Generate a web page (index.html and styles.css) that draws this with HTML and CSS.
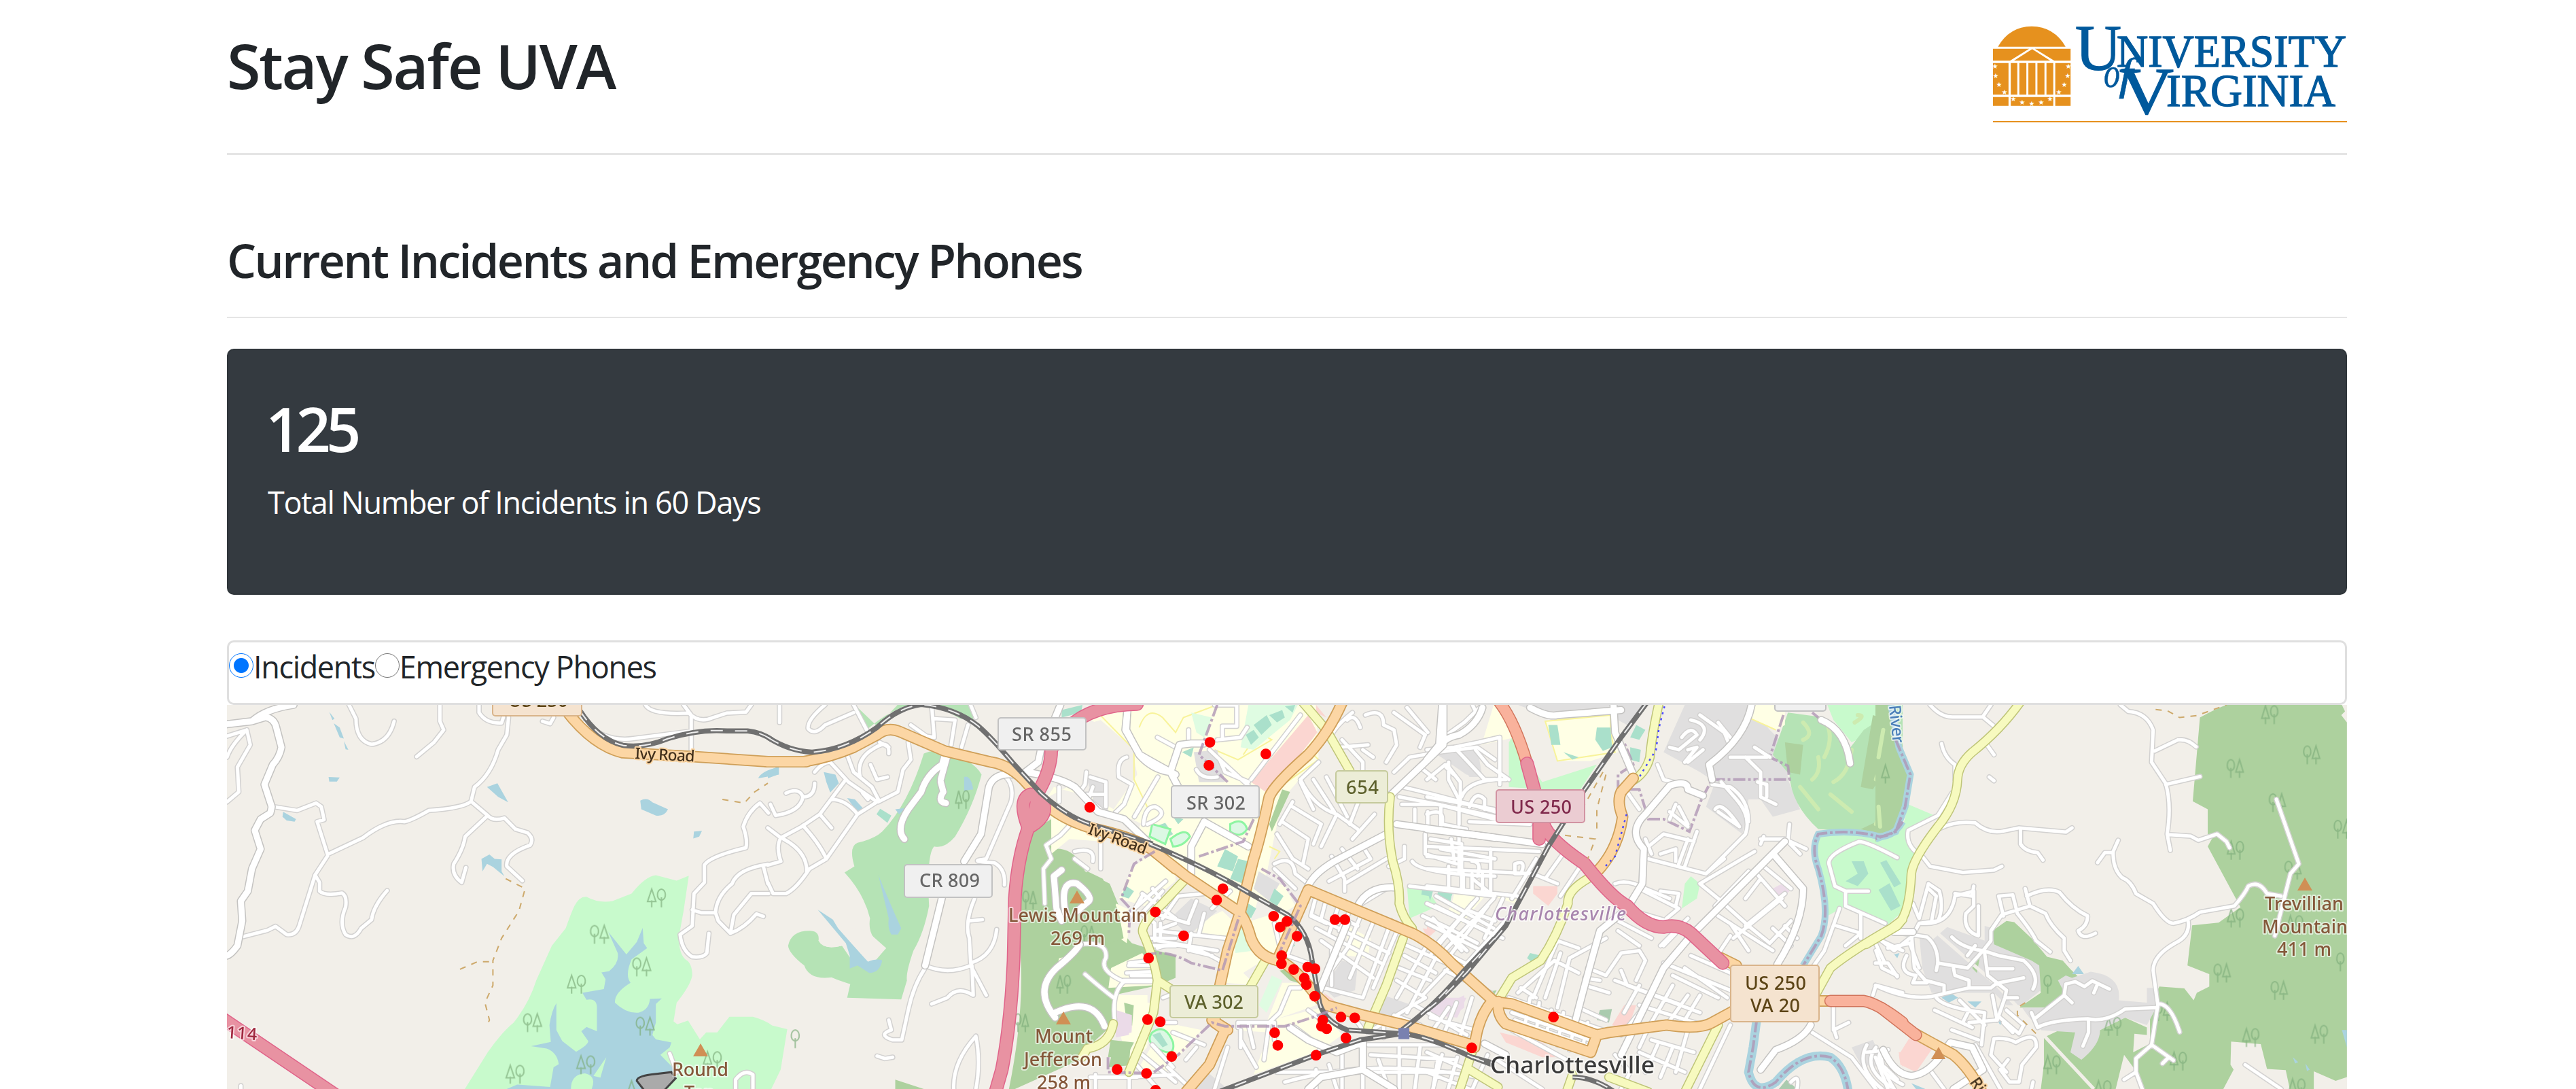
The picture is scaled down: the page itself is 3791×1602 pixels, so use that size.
FILE: index.html
```html
<!DOCTYPE html>
<html lang="en">
<head>
<meta charset="utf-8">
<title>Stay Safe UVA</title>
<link rel="stylesheet" href="styles.css">
</head>
<body>
<div class="container">
  <header class="header">
    <h1 class="title">Stay Safe UVA</h1>
    <svg class="logo" viewBox="2933 35 521 150" role="img" aria-label="University of Virginia">
      <g transform="translate(2900 20) scale(.3699 .3333)">
        <g fill="#e6911e">
          <path d="M109,146Q155,57 243,56Q332,57 378,146Z"/>
          <path d="M89,155H233L157,208H89Z M256,155H398V208H333Z M245,157L317,208H173Z"/>
          <path d="M89,218H151V358H89Z M160,218H186V358H160Z M194,218H222V358H194Z M230,218H258V358H230Z M266,218H294V358H266Z M302,218H329V358H302Z M337,218H398V358H337Z"/>
          <path d="M89,368H151V407H89Z M160,368H329V407H160Z M337,368H398V407H337Z"/>
          <path d="M89,474H1498V480H89Z"/>
        </g>
      </g>
      <g class="stars" text-anchor="middle">
        <text x="2936" y="101">★</text><text x="2937" y="115">★</text><text x="2942" y="128">★</text><text x="2950" y="139">★</text><text x="2963" y="149">★</text><text x="2976" y="154">★</text><text x="2990" y="156">★</text><text x="3004" y="154">★</text><text x="3017" y="149">★</text><text x="3030" y="139">★</text><text x="3038" y="128">★</text><text x="3043" y="115">★</text><text x="3044" y="101">★</text>
      </g>
      <g class="wordmark">
        <text x="3054" y="103" font-size="96" textLength="68" lengthAdjust="spacingAndGlyphs">U</text>
        <text x="3115" y="97.500" font-size="67" textLength="338" lengthAdjust="spacingAndGlyphs">NIVERSITY</text>
        <text x="3119" y="166.500" font-size="97" textLength="80" lengthAdjust="spacingAndGlyphs">V</text>
        <text x="3188" y="155.500" font-size="68" textLength="249" lengthAdjust="spacingAndGlyphs">IRGINIA</text>
        <text class="of" x="3096" y="128" font-size="62" textLength="24" lengthAdjust="spacingAndGlyphs">o</text>
        <text class="of" x="3118" y="131" font-size="66" textLength="21" lengthAdjust="spacingAndGlyphs">f</text>
      </g>
    </svg>
  </header>
  <hr class="rule rule-top">
  <h2 class="subtitle">Current Incidents and Emergency Phones</h2>
  <hr class="rule rule-sub">
  <section class="card">
    <h3 class="count">125</h3>
    <p class="caption">Total Number of Incidents in 60 Days</p>
  </section>
  <form class="options">
    <label class="option"><input class="radio" type="radio" name="layer" checked><span>Incidents</span></label>
    <label class="option"><input class="radio" type="radio" name="layer"><span>Emergency Phones</span></label>
  </form>
  <svg class="map" viewBox="334 1037 3120 565">
    <defs>
      <g id="pine"><path d="M0,55L12,5L24,55Z M12,50V78"/></g>
      <g id="leaf"><path d="M12,50C-6,42 0,5 12,5S30,42 12,50Z M12,38V78"/></g>
      <g id="tp"><use href="#pine"/><use href="#leaf" x="28"/></g>
      <g id="tl"><use href="#leaf"/><use href="#pine" x="28"/></g>

      <g id="minor">
        <g transform="translate(330 1030) scale(.5102 .3648)">
          <path d="M8,410L42,370L38,270L75,180L65,120L8,145 M65,120Q20,180 8,230 M360,19L380,75Q380,165 425,178Q475,170 490,85 M622,19V85L633,120L605,170L555,228 M735,19V50Q755,95 800,92L805,70 M820,70L815,140L790,200Q770,300 722,350L712,408Q690,435 590,445Q540,485 520,490Q470,480 400,555L298,622L268,490L288,482L280,430L265,415L210,445L145,430 M298,628L262,705L215,915Q205,950 180,945L148,912L125,928L50,955 M262,705L275,735V770Q290,790 340,778Q355,790 350,835Q330,900 350,945Q375,970 395,920L425,885Q430,830 470,768 M712,408L760,465L695,550Q690,600 662,660Q655,705 685,735L697,675 M760,465Q775,490 808,475L840,520L875,535Q895,560 882,585Q810,620 815,670L860,728 M918,85L940,95L950,70 M1215,19Q1230,60 1340,52Q1370,95 1410,70L1450,52L1505,48L1520,19 M1325,19L1347,60V200 M1040,90Q1100,170 1180,155L1347,125 M1570,455L1545,415Q1510,450 1497,510Q1510,560 1505,595Q1400,630 1385,665V735L1355,780L1350,910L1315,945Q1320,1010 1350,1035Q1380,1040 1392,1020L1398,940 M1350,845L1375,857H1417L1425,890L1460,940L1470,865L1520,780H1570 M1417,857Q1420,790 1465,740Q1480,680 1568,662 M1555,670L1568,740 M1460,940Q1500,920 1535,862L1555,872 M1285,1425L1305,1500 M1475,1568V1530Q1500,1485 1525,1510V1568 M48,1555V1568"/>
        </g>
        <g transform="translate(1130 1030) scale(.38265 .3648)">
          <path d="M45,19V90 M220,19Q150,80 155,115Q180,145 220,100L330,50 M330,19L380,120 M630,19L640,150L610,145L550,100 M640,75L720,80L705,180 M770,100L745,190 M780,19L800,70"/>
          <path d="M180,290Q210,250 240,250L310,330L420,410L345,460L225,640 M305,220L330,290L400,350L425,400 M355,310Q340,240 400,200Q470,150 465,215 M395,260L420,320L460,310 M540,170L550,240L520,280L500,370L425,410 M300,320L200,460L130,510L50,555L0,515 M70,375Q120,350 135,390Q125,450 30,465L10,420 M135,390Q180,390 180,335 M245,400Q300,400 345,460 M135,505Q200,580 225,640L160,680Q110,760 70,780H20L0,735 M50,555Q30,590 50,650L0,665 M60,560Q150,610 150,690 M200,460L245,515 M365,375L385,400 M430,170L465,190"/>
          <path d="M910,305Q950,340 935,410L840,640Q760,650 870,655Q915,680 910,745 M795,800Q755,900 775,960L780,1060Q870,1030 880,925 M775,890L825,885 M605,1070Q690,1110 780,1070L840,1190 M785,1070L790,1190Q730,1150 690,1200L630,1225 M605,1080Q560,1150 540,1250L515,1370H480Q420,1350 475,1330L465,1290 M800,1355Q710,1460 715,1568 M800,1355Q820,1460 800,1568 M420,1435L450,1445L480,1440"/>
          <path d="M1165,500L1125,545L1070,585L1090,640L1060,680L1065,820 M1200,985Q1310,970 1300,1040Q1270,1090 1370,1135L1480,1135 M1370,1135Q1320,1180 1335,1300 M1220,1105Q1280,1160 1330,1200 M1225,290L1220,340L1200,370L1280,440 M1240,310L1300,330V430 M1225,380L1290,380 M1250,350L1230,410 M1350,310Q1340,240 1380,230 M1350,310L1400,340L1370,420L1335,455 M1500,310L1410,470 M1445,500Q1450,430 1490,430Q1550,460 1460,500 M1180,610Q1260,590 1250,650 M1180,640L1230,680 M1280,560V680 M1120,350V410 M1440,780L1568,880 M1400,850L1530,730 M1440,790L1390,880 M1480,760L1530,830 M1490,930L1568,900 M1460,960H1568 M1470,990H1568 M1380,1100L1480,1095 M1390,1060L1470,1050 M1510,900V950 M1520,1200L1568,1180 M1500,1300H1568 M1400,1450L1500,1568 M1240,1520H1420 M1260,1568V1510 M1390,1510V1568 M1440,1430L1568,1540"/>
        </g>
        <g transform="translate(1600 1030) scale(.38265 .3648)">
          <path d="M270,150L340,190 M390,120V180 M490,19H575V105H520V150 M500,160L590,150L615,110 M470,200L510,240L530,290L620,330 M510,240L620,345 M420,280Q440,320 500,310 M820,60L630,320 M1020,50Q960,100 940,140 M1050,110Q1030,50 1000,80 M1070,60Q1140,30 1140,100L1180,120L1190,180L1150,250 M980,160L1060,250V290 M970,190L1080,180 M1060,200L1100,230 M1180,50L1300,140L1280,190 M1230,30L1310,130 M1370,150L1450,90L1520,19 M1180,290L1240,230L1350,210L1500,190L1568,240 M1280,270L1340,320 M1390,250V320L1430,400V500 M1210,350Q1380,390 1568,450 M1200,390Q1400,430 1568,470 M1380,270L1410,300 M1440,390Q1460,330 1568,320"/>
          <path d="M890,250L820,320Q870,430 960,460L1040,520 M820,330L870,440 M870,320L950,450 M920,310L1000,470 M790,410L740,500 M790,430L900,500L870,580 M750,490L850,560L830,660 M730,540L790,640L850,680 M960,460L900,590 M1050,390L1010,500 M1105,460L1020,560 M720,660Q790,620 800,700L850,740 M720,680L800,760 M940,630L990,720V770 M980,600L1040,680 M1060,590L1090,640L930,730 M1150,640L990,740 M880,790L860,870L920,900 M920,800L900,880 M970,820L930,940 M1010,850L970,930 M870,870L1160,1020 M880,920L1130,1060 M900,970L1100,1120 M1060,850L1000,1000L910,1130 M1110,870L1010,1120 M1170,890L1060,1200 M1200,910L1100,1160 M910,1160L1060,1200 M940,1010V1150 M1040,830L1150,760 M980,880L1040,910"/>
          <path d="M1210,420H1350L1568,480 M1260,440V500 M1310,450V510 M1360,430V510 M1300,540V620L1420,660 M1250,650Q1280,700 1568,710 M1320,560L1440,580V760 M1360,600L1568,640 M1430,540V700 M1480,650Q1520,650 1500,710 M1390,670V760 M1480,700V770 M1520,700V780 M1220,590V640L1160,670 M1240,750L1568,790 M1230,990L1380,1060 M1220,1030L1340,1100 M1200,1080L1320,1130 M1190,1130L1300,1200 M1290,870L1390,920L1500,980 M1340,830L1568,950 M1330,880L1440,1010 M1540,830L1380,1050 M1500,800L1330,1000 M1300,1000L1190,1200 M1340,1040L1230,1260 M1390,1080L1290,1190 M1470,850L1568,890 M1410,960L1460,1010"/>
          <path d="M290,770L210,860L260,900V970 M330,770L260,860L390,900 M260,930L530,960 M270,970L500,1010 M270,1000Q360,960 510,1050 M390,890L420,810 M400,940L390,1010 M290,880L350,790L450,780 M430,940L450,860 M160,1070H250 M170,1110H250 M550,770L480,840 M140,1130H260 M400,1010L480,1030 M740,990L720,900 M790,970L770,1030L850,1060 M820,1160L780,1160L740,1260L700,1300L680,1450 M850,1250L890,1280 M800,1320L900,1400L880,1430 M590,1330V1400 M540,1400L490,1568 M580,1320V1300L720,1300 M620,1310L640,1400 M310,1480L400,1568 M160,1520L340,1510 M250,1390L330,1480 M450,1390L330,1340 M420,1400L380,1450 M590,1370L650,1480 M720,1370V1300 M980,1430V1568 M1060,1400V1568 M730,1500H1400 M760,1540Q1100,1440 1500,1520 M880,1490V1568 M930,1470L960,1568 M1120,1450L1160,1568 M1200,1400V1568 M1280,1400L1260,1568 M1350,1440L1330,1568 M1080,1390H1400 M1090,1430L1420,1450 M1000,1240L1060,1330 M1080,1340L1300,1200 M1140,1280V1360 M1180,1270L1280,1310 M1260,1230L1460,1350 M1320,1280L1490,1330 M1420,1220L1370,1350 M1480,1200L1430,1370 M1330,1330L1390,1240"/>
        </g>
        <g transform="translate(2100 1030) scale(.44643 .3648)">
          <path d="M0,200L90,190L170,170L240,150 M150,19L170,70 M90,190L190,320L260,320 M240,150V340 M65,260L110,330V420 M160,200L200,260L270,320 M0,390L220,440 M0,320L60,260 M140,430Q160,360 190,400V440 M0,460Q60,430 50,500L130,520 M140,490L340,500 M0,630L210,650 M80,560L90,650 M0,590L370,610 M0,680L350,700 M210,600V780 M0,750L300,790 M290,700V660Q330,640 310,700Z M360,640L280,800 M120,700V760 M150,720L200,770 M350,700L430,740 M460,600L390,720 M500,680L440,790 M250,800L190,960 M0,820L250,960 M30,790L220,920 M0,900L180,1010 M0,980L140,1070 M220,800L50,1020 M150,820L10,1030 M280,860L110,1090 M60,1090L210,1180"/>
          <path d="M350,1200L430,970L500,1000 M390,1200L440,1020 M430,1240L470,1040L590,960 M300,1180L420,1050L500,1100 M310,1160L360,1200 M270,1200L580,1330 M280,1260L560,1380 M340,1200L320,1330 M370,1220L360,1350 M410,1250L390,1370 M450,1260L430,1390 M490,1280L470,1410 M530,1300L510,1420 M290,1290L540,1400 M500,1240L590,1290 M520,1150L600,1180 M530,1080L590,1110L640,1020L700,1010L720,1050L690,1130 M520,1120L570,1130 M630,930L700,990 M640,1090L660,1150L900,1260 M620,1130L840,1230 M700,1150L650,1260 M760,1130L700,1260L640,1350 M810,1150L740,1300 M860,1190L790,1310 M900,1190L850,1290 M780,1060L1000,1170 M810,1110L960,1200 M850,1080L990,1200 M870,1030L1000,1100 M700,1230L960,1330 M740,1370L880,1420 M700,1420L850,1500 M760,1390L720,1500 M810,1400L770,1520 M620,1430L670,1500L640,1568 M860,1330L820,1500 M1000,1310L900,1568 M730,1320L700,1400 M280,1330L460,1450 M200,1430L150,1568 M0,1500L140,1568 M50,1430L20,1568 M100,1440L70,1568 M0,1420L150,1500 M230,1450L380,1568"/>
          <path d="M620,740Q660,720 720,760L800,800 M700,760L830,840L790,880 M680,850L790,890L820,940 M770,770L830,780L820,830 M630,890L740,960 M730,640L920,700L1050,540Q1070,470 1020,400L970,330 M730,590L780,540L880,570 M740,620L720,560 M860,560L830,660 M770,620L820,600V650 M890,530L850,670 M940,340L1000,350Q1060,400 1060,490 M950,440Q970,400 1030,510L960,450 M800,450L860,510 M830,430L860,500 M820,420L800,480 M660,370L700,440 M1050,230L1100,290V390L1150,420 M1090,330L1120,340V390 M1000,230L1120,230 M1080,190L1130,230 M900,60L980,130L1000,190 M960,90L1000,150 M840,150Q870,100 890,140L830,200L800,190 M860,200L890,190L850,250 M870,80Q940,100 900,160 M910,200L860,250 M760,260L780,320L840,340 M1100,560L1180,560L1250,600 M1100,580L1110,550 M1195,500L1190,570L1230,620 M900,740L960,800L1060,910L1130,980 M900,740L1080,610 M920,700L980,640 M950,830L1060,690 M960,870L1140,1010 M1050,910L1180,780 M1080,690L1180,830 M1110,670L1200,760 M1010,960L1170,800 M1130,980L1200,890 M1180,910L1220,960 M1140,920L1200,990 M1000,950L940,1060 M1060,1010L1000,900 M860,880L770,990 M820,940L780,990 M1050,800L1100,720"/>
          <path d="M1550,635Q1450,570 1425,570Q1320,620 1325,660L1345,750L1380,770L1455,770 M1380,770V830L1510,900 M1360,840L1310,1010L1270,1080 M1350,910L1430,940L1380,990 M1430,860V960 M1480,1010L1500,1080L1550,1110 M1480,960L1568,1010 M1340,1230V1330L1390,1300 M1270,1340L1400,1440L1480,1568 M1340,1320L1350,1360 M1470,1190L1480,1150L1568,1180 M1450,1390Q1410,1480 1500,1568 M1480,1400Q1430,1480 1530,1560 M1500,1410Q1460,1480 1568,1550 M1450,1420L1520,1410 M1200,1540Q1230,1500 1220,1568"/>
        </g>
        <g transform="translate(2760 1030) scale(.45918 .3648)">
          <path d="M175,19Q210,70 250,68H345L385,110 M345,65L370,19 M360,185L380,220 M212,175Q220,230 255,260V320 M245,375L200,465L105,525Q95,590 150,630L175,670L280,695L380,685L405,670 M210,515Q260,485 320,495Q360,540 410,528L460,515L610,532L630,515 M465,520V580Q480,610 520,615L537,645 M365,310L380,325"/>
          <path d="M120,820L140,880L170,740L205,770Q220,840 200,890L140,900L115,960 M170,760L195,790L180,890 M145,900Q240,910 255,790L315,770V830L290,860Q280,930 330,950V830 M255,780L310,790L315,750 M410,870L395,790L440,785L455,860 M480,760L495,830L405,865L370,930V970L345,1010L395,1030L475,1050Q530,1110 505,1165 M485,790Q550,750 590,775Q630,840 680,870Q680,910 650,930Q660,970 705,940 M495,830L545,860Q560,910 605,960V1010L625,1050 M455,860Q500,930 515,970L560,1015 M245,955Q280,1000 345,1010L295,1080L200,1060L195,1090 M320,990L295,1030 M350,1020L360,1110L420,1170L415,1200L390,1290L300,1300 M360,1083H440 M395,1140L475,1120 M415,1200H455 M250,1080L255,1110L300,1130V1160 M0,1150Q100,1210 180,1195L300,1160H370L390,1140"/>
          <path d="M60,935L165,955Q200,990 200,1060 M115,940L125,1080L160,1130L220,1150V1180 M20,970L60,1010L110,960 M100,1030Q70,1100 130,1110L120,1140H165 M0,1060L40,1060L70,1115 M0,980L30,1060 M40,1000L110,980L140,1080 M195,1200Q220,1240 350,1260L340,1390 M270,1210L350,1310 M190,1250L310,1320 M245,1330L330,1370 M300,1250L280,1300 M375,1190L390,1290 M390,1270L460,1345L475,1310L420,1250 M410,1300L440,1340 M370,1430L380,1365Q420,1360 450,1380Q520,1330 515,1400L470,1470L460,1540H430L400,1490L425,1450 M370,1430L420,1500 M180,1500L220,1568 M320,1390L400,1568 M505,1540L500,1568 M20,1410Q10,1470 60,1568 M0,1440L40,1568 M30,1480L70,1530"/>
          <path d="M515,1280L605,1190L630,1220 M605,1190L610,1145L640,1135L670,1155L695,1132L750,1165 M710,1150L700,1180 M500,1260L520,1320Q560,1290 680,1285Q740,1300 800,1245L900,1240 M683,1290V1340L665,1395"/>
          <path d="M785,19L810,45Q870,50 890,120L885,250L930,335Q950,420 935,540L945,605 M895,205L970,160Q1000,155 1028,188 M930,340L1040,308 M940,542L1010,548L1035,565L1095,540L1125,570L1135,595 M778,565L762,610Q760,680 790,715Q820,730 835,780L890,820Q930,900 955,900Q1000,890 1040,855L1150,830Q1185,780 1195,750Q1230,725 1255,780L1300,790 M712,655L735,615H760 M1285,400L1357,660L1330,700L1280,950 M1002,890Q1010,950 960,980Q890,1030 890,1090L905,1230L885,1390L835,1445V1500L855,1568 M905,1225Q945,1220 975,1338 M885,1390L955,1452 M920,1465L940,1440 M835,1500L797,1530 M1185,1470L1300,1568"/>
        </g>
      </g>

      <g id="tertiary">
        <g transform="translate(330 1030) scale(.5102 .3648)"><path d="M8,97L80,85L120,68Q145,75 150,110L165,190Q160,230 140,260L116,340L137,430L133,455L105,480L88,525L105,600L80,680L68,770L48,810L52,890L38,990Q20,1025 8,1030 M80,85Q120,35 200,19"/></g>
        <g transform="translate(1130 1030) scale(.38265 .3648)"><path d="M950,300Q870,290 850,350L820,540L755,650 M670,795L605,1070 M1125,19L1105,70 M1050,200L1040,250L990,290 M990,290Q1120,310 1180,350L1270,450L1370,480L1460,570 M1385,19L1375,120L1430,220Q1530,280 1568,300 M680,225L670,260Q610,300 590,370L540,440Q490,520 525,560 M665,320L690,225 M665,330L675,370Q650,410 685,415 M1130,685L1100,710L1110,840L1130,890 M1145,860Q1120,720 1190,740Q1250,790 1235,810L1190,850 M1200,985Q1180,1020 1110,1080Q1020,1170 1105,1280 M1105,1260Q1250,1190 1295,1315"/></g>
        <g transform="translate(1600 1030) scale(.38265 .3648)"><path d="M155,19L150,120L200,220Q250,280 320,290L355,180L400,175H450 M320,290L350,350 M450,490L400,590V700 M450,490L620,590 M1370,19V180L1150,400 M1350,200Q1370,150 1430,140Q1500,100 1520,30 M1190,500L1568,555 M850,750Q870,700 950,650L1150,540 M1040,830Q1080,750 1180,755 M1000,900L890,1180 M780,1320L850,1370L960,1420L1060,1380V1490L1180,1568 M1060,1490L900,1520L850,1568"/></g>
        <g transform="translate(2100 1030) scale(.44643 .3648)"><path d="M50,19L40,180L0,240 M340,30Q400,70 430,60L640,40 M615,19L620,130L680,300 M1070,19Q1050,150 930,260L940,320 M720,460L800,345Q860,320 860,360L910,385 M720,460Q660,530 715,600L710,740L670,820 M650,850L570,930Q530,1100 490,1290 M1180,570L870,950L780,1080L640,1430 M1145,625L1240,760Q1240,900 1155,1065 M1300,80Q1380,120 1395,255 M190,1385L260,1430 M1265,1310Q1240,1370 1150,1410L1100,1490 M0,520L200,550L380,580 M360,500L400,570"/></g>
        <g transform="translate(2760 1030) scale(.45918 .3648)"><path d="M25,1410Q60,1510 115,1515Q160,1510 200,1450L240,1380L310,1400L345,1490L250,1568 M60,935H120"/></g>
      </g>

      <g id="secondary">
        <g transform="translate(1600 1030) scale(.38265 .3648)"><path d="M830,10L920,120L1010,285 M1165,390Q1150,520 1175,650Q1205,750 1200,820Q1215,880 1250,920 M1215,960L1150,1150L1080,1320 M685,1050L625,1160 M375,725L290,820Q200,910 215,940Q260,1050 270,1130L255,1260L160,1500 M270,1130L330,1170 M100,1305Q85,1390 0,1405L-20,1440 M1480,1420L1430,1580 M1470,1490L1580,1560"/></g>
        <g transform="translate(2100 1030) scale(.44643 .3648)"><path d="M765,10Q740,150 735,230Q720,300 670,330 M530,720Q460,770 465,820Q430,950 375,1050L280,1120L240,1200 M1568,885L1530,920Q1400,1010 1330,1080L1285,1180 M960,1310L850,1580 M480,1510L460,1580 M600,1520L730,1580"/></g>
        <g transform="translate(2760 1030) scale(.45918 .3648)"><path d="M463,10Q400,120 310,210Q265,260 263,320Q260,420 200,510Q120,640 115,700Q110,860 70,910L-30,985"/></g>
      </g>

      <g id="primary">
        <g transform="translate(330 1030) scale(.5102 .3648)"><path d="M985,40Q1065,185 1150,212L1360,228L1568,248H1680"/></g>
        <g transform="translate(1130 1030) scale(.38265 .3648)"><path d="M-5,248H140Q240,230 330,190L420,140Q460,105 510,128L680,205L860,250Q940,265 1000,340L1060,410Q1120,475 1240,515Q1400,550 1475,600L1568,680"/></g>
        <g transform="translate(1600 1030) scale(.38265 .3648)"><path d="M240,595L380,710L580,850Q610,880 630,960Q660,1040 740,1050Q800,1080 880,1190L920,1230L1060,1270L1220,1310L1480,1390 M980,10Q930,130 850,220Q720,340 700,390Q665,560 640,640L590,850L540,1010L500,1200L490,1300L530,1330Q500,1400 470,1470L380,1580 M730,1050L850,765L1250,940Q1330,980 1400,1060L1560,1210Q1500,1280 1490,1400 M480,1290L540,1330"/></g>
        <g transform="translate(2100 1030) scale(.44643 .3648)"><path d="M217,1215L280,1225L560,1350L540,1420L260,1305Q230,1270 235,1215 M560,1350L600,1340L790,1310Q900,1330 940,1300L1030,1240 M680,315L640,370Q625,410 645,470Q630,600 562,690 M1290,1213H1340 M970,1040L1020,1070"/></g>
        <g transform="translate(2760 1030) scale(.45918 .3648)"><path d="M120,1340L250,1430Q300,1480 345,1590"/></g>
      </g>

      <g id="trunk">
        <g transform="translate(2100 1030) scale(.44643 .3648)"><path d="M240,10Q290,90 330,255 M1330,1213H1440Q1490,1225 1568,1300"/></g>
        <g transform="translate(2760 1030) scale(.45918 .3648)"><path d="M20,1242L130,1350"/></g>
      </g>

      <g id="motorway">
        <g transform="translate(330 1030) scale(.5102 .3648)"><path d="M-20,1270L330,1600"/></g>
        <g transform="translate(1130 1030) scale(.38265 .3648)"><path d="M1420,16Q1180,20 1090,200Q1090,280 1040,370Q1020,500 1000,520Q960,640 950,800L945,1050Q935,1300 900,1490L870,1600 M1010,380Q960,400 1000,510 M1050,400Q1090,460 1010,510"/></g>
        <g transform="translate(2100 1030) scale(.44643 .3648)"><path d="M330,255L385,500Q400,560 520,660Q610,800 660,830Q720,915 780,915Q830,900 870,940L975,1060 M370,500V560"/></g>
      </g>

      <g id="rail">
        <g transform="translate(330 1030) scale(.5102 .3648)"><path d="M1025,40Q1080,160 1150,182Q1210,195 1280,155Q1370,115 1450,124H1510Q1550,130 1580,160"/></g>
        <g transform="translate(1130 1030) scale(.38265 .3648)"><path d="M0,150Q80,205 170,210Q300,200 420,110Q500,30 590,17Q720,30 810,105Q860,150 940,250L1050,375Q1150,470 1240,500L1480,580"/></g>
        <g transform="translate(1600 1030) scale(.38265 .3648)"><path d="M240,580Q450,670 610,770L770,865Q850,930 865,1050L890,1200Q900,1290 1000,1330L1210,1345Q1300,1350 1480,1440L1568,1465 M480,1590L880,1430L1050,1370L1210,1345 M1210,1330Q1340,1230 1450,1090L1568,960"/></g>
        <g transform="translate(2100 1030) scale(.44643 .3648)"><path d="M0,1250L50,1200L130,1100L260,910L400,590L520,360L640,150L725,10 M150,1440L215,1470 M480,1520Q560,1520 640,1600"/></g>
      </g>
    </defs>

    <!-- land cover -->
    <rect x="334" y="1037" width="3120" height="565" fill="#f2efe9"/>
    <g transform="translate(330 1030) scale(.5102 .3648)">
      <path class="park" d="M694,1568L760,1420Q800,1340 835,1300Q880,1220 900,1130L945,990L985,920Q1000,860 1010,830Q1025,790 1045,793Q1080,820 1120,810L1175,780Q1215,710 1245,706L1305,728L1340,708L1325,850L1312,950Q1310,1020 1330,1045Q1350,1060 1350,1110Q1345,1150 1305,1220L1296,1295L1307,1307L1338,1292L1372,1368L1390,1340H1422L1457,1277H1525Q1560,1290 1580,1312L1624,1327L1605,1490L1578,1568Z"/>
      <path class="water" d="M795,1580L845,1550L940,1560L950,1480L965,1468Q960,1420 930,1405L885,1395L942,1378L938,1310Q945,1250 958,1222V1330L975,1375L1015,1418Q1050,1390 1050,1375L1030,1335L1045,1318L1075,1335V1240Q1075,1200 1045,1208L1033,1180L1095,1165L1100,1125L1088,1098L1110,1093Q1140,1060 1135,1020L1108,935L1160,1025L1190,975L1207,918L1210,980L1220,1000L1175,1045Q1155,1110 1172,1140Q1125,1180 1127,1220Q1160,1265 1195,1260Q1225,1250 1228,1205L1262,1203L1245,1225V1300L1235,1350L1245,1368L1290,1380L1285,1400L1258,1430L1300,1490L1240,1580Z"/>
      <path class="park" d="M1000,1568Q1000,1510 1040,1505Q1075,1515 1060,1568Z M1102,1440L1065,1515L1085,1522Z"/>
      <path fill="#aaa" stroke="#444" stroke-width="3" d="M1190,1535Q1190,1518 1230,1510L1290,1500L1302,1525L1265,1580H1215Z"/>
      <path class="water" d="M303,47L318,75L312,80Z M316,93L333,110L345,155L333,150Z M345,165L358,200L350,198Z M301,310L333,312L325,328H303Z M758,350L788,335L819,412L790,390Z M742,640L765,622L780,640L800,642V690L808,710L775,672L758,660L745,690Z M170,450L207,480L203,490L180,485L168,470Z M1200,405Q1220,390 1235,412L1280,440Q1270,470 1245,465L1203,440Z M1355,530L1378,527L1370,550L1353,558Z M1540,315Q1550,285 1600,270V300Z"/>
    </g>
    <g transform="translate(1130 1030) scale(.38265 .3648)">
      <path class="golf" d="M335,19L385,115Q480,30 560,18L780,19L790,80L740,75L640,18H500L420,105Z M440,20H790V75L700,40L590,19Z M600,215Q650,190 700,225Q790,240 822,300Q790,430 720,550Q680,600 640,590Q610,620 620,830Q600,940 560,1010Q530,1100 535,1130L513,1207L305,1200L317,1145Q270,1130 245,1118Q160,1130 140,1070Q80,1020 78,990Q90,930 160,930Q200,930 195,970Q215,1010 285,990L410,1040L455,1000Q380,960 393,880Q370,780 295,695L333,670Q310,590 345,575Q410,560 440,530Q540,420 600,215Z"/>
      <path fill="#f2efe9" d="M195,970Q215,1010 285,990L330,1060L410,1055L455,1000L380,930L230,900Z"/>
      <path class="water" d="M192,845L250,885L270,920L312,970L385,1055Q420,1040 440,1050Q430,1100 390,1100L345,1070L315,1082V1030L300,980Z M425,705Q470,820 513,920L500,945H475Q460,920 465,880Z M755,310Q780,300 790,360L755,365Z M215,290L260,300L273,335L240,372L225,330Z M305,395L335,400L365,435L345,452Z M0,285L35,270L38,300L0,315Z M490,440L530,435L505,460Z"/>
      <path class="pitch" d="M432,438L475,465L460,495L418,460Z M1130,40L1210,19L1205,50L1130,70Z"/>
      <path class="wood" d="M1090,480L1095,600Q1180,590 1220,690L1315,740L1350,830L1330,900L1400,980L1460,1000L1568,1030V1120L1500,1150L1330,1190L1335,1300L1230,1400L1200,1450L925,1580Q990,1250 970,1000Q970,700 1010,530Z M490,1530L600,1568H490Z"/>
      <path class="wood" d="M1330,1400L1450,1370L1420,1470L1310,1480Z"/>
      <path class="school" d="M1230,70L1400,19H1568V600L1500,570L1440,500L1400,480L1290,460L1200,380L1100,350L1070,400L1110,460L1200,490L1290,570L1160,560L1090,620V480L1060,400L1170,340L1300,420L1420,300L1400,190Z M1500,590L1568,650V730L1450,830L1350,800L1400,680Z M1340,820L1400,850L1380,980L1300,920Z M1320,1080L1440,1020L1480,1080L1480,1150L1310,1160Z M1340,1190H1460V1360L1370,1400L1340,1300Z M1180,1110L1220,1100L1200,1130Z M1120,1040L1170,1030L1110,1090Z"/>
      <path fill="#f2efe9" d="M1280,80L1400,190L1420,300L1330,440L1190,350L1060,290L1110,130Z"/>
      <path class="wood" d="M1370,1220L1440,1240L1430,1330L1380,1300Z M1110,1060L1300,1040L1310,1150L1230,1100L1140,1200L1180,1230Z"/>
      <path fill="#ebdbe8" d="M1340,1250L1400,1270V1340L1340,1355Z"/>
    </g>
    <g transform="translate(1600 1030) scale(.38265 .3648)">
      <path class="school" d="M50,60L170,19H880L890,230L750,400L690,700L640,860L600,960L580,1100H540L590,880L430,780L400,700L250,600L200,510L240,450L290,310L200,260L140,130Z M420,900L520,850L570,900L530,960L420,930Z M600,900L720,860L780,870L740,1010L690,1040L600,1100L650,1150L530,1140Z M640,700L760,750L800,830L750,860L620,780Z M560,1330L900,1240L980,1350L900,1410L640,1510L700,1340Z M750,1140L840,1140L880,1230L690,1300Z M180,1220L260,1220L230,1400L160,1480Z M300,1300L440,1330L300,1500L200,1480Z M1430,780L1530,790L1440,900L1380,860Z M1000,910L1090,960L1080,1040L1000,1030Z"/>
      <path class="school-line" d="M50,60L180,200V320L240,450 M200,110Q230,20 290,70L340,130L370,70L500,19 M490,200L580,240L710,160L660,130L600,220 M740,350L890,240L860,210 M700,590L740,610L720,640"/>
      <path class="residential" d="M410,210L500,200L530,330H430Z M0,320L80,320V460L30,430Z M660,690L740,740L700,810L640,760Z M1340,220L1500,190L1520,310L1470,310L1440,260Z M910,1160L980,1050L1040,1070L1030,1170L950,1200Z M400,800L500,850L390,950L320,880Z M440,1480L540,1568H380Z M1140,1190L1250,1230L1200,1290L1120,1270Z"/>
      <path class="retail" d="M850,60L885,130L700,380L630,330Z M880,19L920,70L880,50Z M1290,920L1340,930L1310,960Z M910,1180L950,1210L930,1230Z"/>
      <path class="park-light" d="M620,19H810L780,80L640,200L590,190Z M400,50L480,70L450,150L420,130Z M560,900L600,910L640,1010L570,1020Z M660,1230L710,1110L750,1130L690,1260Z"/>
      <path class="pitch" d="M610,140L640,120L660,150L630,180Z M640,100L690,60L710,100L670,140Z M700,60L750,40L760,70L730,90Z M760,25L800,19L790,50Z M365,210L410,190L400,230Z M260,510L300,495L330,540L280,570Z M530,600L580,630L560,690L500,670Z M580,640L620,650L600,740L550,720Z M720,760L755,790L730,830L700,810Z M620,820L650,840L630,880L610,860Z M150,750L180,770L160,800L130,790Z M330,470L370,480L350,500Z M770,940L800,990L760,1010Z"/>
      <path class="wood" d="M750,360L780,370L710,530L700,500Z M0,690L60,720L120,850L140,960L60,990L0,940Z M280,1060L340,1080L310,1120L270,1110Z M90,1370L180,1380L150,1440H80Z M740,1090L800,1080L840,1150L780,1130Z"/>
      <path class="track" d="M250,1340Q300,1300 330,1380Q340,1440 280,1410Q220,1380 250,1340Z M320,560Q380,510 395,550Q370,590 330,590Z M550,500Q600,470 615,520Q590,560 550,530Z M250,500L320,520L300,580L240,550Z"/>
      <path class="pitch" d="M250,1350L280,1340L310,1390L290,1400Z"/>
      <path class="park" d="M1230,750H1300L1350,830L1240,880Z"/><path class="pitch" d="M1290,750L1330,760L1315,790L1285,785Z M1350,765L1405,770L1395,820L1345,800Z"/>
      <path fill="#ebdbe8" d="M110,1260L170,1280L160,1350L110,1360Z M1320,1260L1450,1190V1240L1400,1280Z"/>
    </g>
    <g transform="translate(2100 1030) scale(.44643 .3648)">
      <path class="residential" d="M300,19H620L720,19L660,100L600,60L400,65Z M850,19H1060L1130,120L1180,180L1190,320L1230,440L1140,470L1100,400H1060L1040,540L920,430L950,330L900,290L780,210Z M35,220L160,190L180,310L130,300Z M1400,1400L1470,1370L1510,1480L1430,1470Z"/>
      <path class="park" d="M270,170L280,150L380,330L560,260L500,370L270,350Z M1290,530L1568,450V840L1510,910L1380,830L1320,870L1275,640Z M1320,19H1568L1540,90L1400,170L1340,80Z M870,710L900,740L890,800L840,840L850,740Z"/>
      <path class="golf" d="M1190,50L1310,70L1390,200L1440,120L1568,19V520Q1520,560 1450,530L1290,520Q1200,420 1195,300L1140,220Z"/>
      <path class="wood" d="M1180,170L1240,180L1230,300L1190,290Z M1470,60L1520,80L1500,300L1470,360L1430,350Z M1568,180V500L1500,540L1430,520L1500,480L1490,400L1530,250Z M180,1180L230,1170L215,1200Z"/>
      <path class="fairway" d="M1240,90Q1280,140 1240,160 M1320,100Q1340,160 1310,230 M1290,230Q1300,290 1270,320 M1400,200Q1390,300 1340,330 M1230,350L1290,440 M1330,380L1400,450 M1500,430L1480,500 M1510,200L1480,320 M1410,90Q1450,60 1420,60"/>
      <path class="school" d="M220,19H240L290,150L180,180Z M390,85L605,60L630,210L540,245L430,245Z M1070,19H1180V100L1150,120L1060,70Z M90,780H180L120,900L75,850Z M220,790L300,785L290,820Z"/>
      <path class="school-line" d="M390,85L605,60V130L620,210L430,245Z M1060,70L1150,120"/>
      <path class="pitch" d="M560,110L605,110L610,190L580,205L555,160Z M690,100L720,120L700,160L670,150Z M670,190L705,200L700,250L670,240Z M400,100L430,100L440,180L410,180Z M340,1020L375,1030L350,1060L330,1040Z M0,760L20,770L10,810Z M40,760L85,780L70,815L30,800Z M1400,650L1440,650L1455,700L1420,750L1380,730L1420,700Z M1495,650L1520,645L1568,720L1550,750Z M1490,770L1530,740L1568,820L1540,850Z M450,210L500,230L480,240Z"/>
      <path class="retail" d="M350,750L430,750V780L400,830L350,780Z M0,910L30,930L0,955Z M650,1230L690,1230L660,1330L610,1310Z M240,1340L380,1380L440,1440L380,1440L260,1380Z M1555,1420H1568V1480Z"/>
      <path fill="#ebdbe8" d="M0,1250L50,1200L130,1200L100,1280L30,1270Z M1140,760L1170,740L1195,770L1170,800Z"/>
      <path fill="#aacbaf" d="M570,1250L610,1245L600,1300L560,1290Z M1160,1568L1185,1530L1220,1568Z"/>
    </g>
    <g transform="translate(2760 1030) scale(.45918 .3648)">
      <path class="park" d="M0,530L90,500L105,420L190,465L110,520L100,570L135,600L115,700L80,860L40,905L0,885Z"/>
      <path class="wood" d="M0,19H45L80,190L120,300L95,430L60,540L0,570Z"/>
      <path class="fairway" d="M25,120L10,230 M10,430L15,510"/>
      <path class="pitch" d="M15,655L35,645L82,740L60,755Z M10,765L45,738L80,830L50,850Z"/>
      <path class="wood" d="M1040,70Q1090,35 1125,19H1495L1505,45L1493,60L1511,90V1520L1475,1535L1405,1497V1568H1328L1315,1492L1255,1487L1235,1387L1140,1377L1138,1470L1148,1490L1115,1568H860L835,1495L797,1430L770,1568H530L540,1470V1360L600,1325L720,1330L800,1280L870,1320V1350L830,1345L826,1420L880,1385V1230L910,1155L990,1162L1020,1210L1030,1180L1070,1155V1105L1000,1070L1015,908L1100,897L1170,835L1065,590L1080,555L1065,540V440L1017,408Z"/>
      <path class="wood" d="M378,985L375,930L420,890L445,895L500,960L550,1035L600,1050L625,1085L670,1140L590,1200L560,1240L460,1240L530,1180L520,1080L450,1030Z"/>
      <path class="residential" d="M140,940L180,970L230,915L350,970V910L375,920L380,985L500,1050L525,1070L530,1170L470,1230L420,1230L380,1180H180L150,1080Z M470,1240H560L610,1190L585,1130L610,1110L630,1120L690,1095Q790,1110 780,1210L870,1220V1160L905,1160L900,1240L870,1310L800,1280L720,1330Q720,1390 660,1450L625,1420L640,1340L520,1330Z"/>
      <path class="wood" d="M310,1080L335,1035L325,1100Z"/>
      <path class="retail" d="M75,1430L115,1350L185,1400L130,1500L80,1470Z"/>
      <path class="water" d="M630,1105L650,1072L668,1105Z M212,1200L240,1180L265,1200L235,1220Z M295,1215L340,1215L320,1240Z M390,1290L410,1290L400,1310Z M60,1025L77,1020L70,1040Z M1495,1330H1511V1400Z M1338,1440L1355,1460L1345,1465Z M1378,1465L1392,1490L1383,1495Z M115,1545L160,1568H130Z"/>
      <path stroke="#f2efe9" stroke-width="5" fill="none" d="M190,930L390,1150L700,1568"/>
    </g>

    <!-- woodland symbols -->
    <g class="trees">
      <g transform="translate(330 1030) scale(.5102 .3648)"><use href="#tp" x="1221" y="757"/><use href="#tl" x="1056" y="904"/><use href="#tl" x="1178" y="1035"/><use href="#tp" x="990" y="1105"/><use href="#tl" x="863" y="1260"/><use href="#tl" x="1188" y="1274"/><use href="#tp" x="1017" y="1430"/><use href="#tp" x="813" y="1468"/><use href="#tp" x="1382" y="1413"/><use href="#pine" x="1163" y="1530"/><use href="#leaf" x="1635" y="1325"/></g>
      <g transform="translate(1130 1030) scale(.38265 .3648)"><use href="#tl" x="980" y="765"/><use href="#tp" x="722" y="360"/><use href="#tp" x="1112" y="1105"/><use href="#tl" x="950" y="1260"/><use href="#tl" x="1205" y="905"/></g>
      <g transform="translate(2760 1030) scale(.45918 .3648)"><use href="#pine" x="20" y="257"/><use href="#tp" x="1238" y="18"/><use href="#tl" x="1372" y="180"/><use href="#tl" x="1127" y="235"/><use href="#tl" x="1262" y="373"/><use href="#tl" x="1470" y="480"/><use href="#tp" x="1128" y="565"/><use href="#tl" x="1312" y="645"/><use href="#tp" x="1128" y="838"/><use href="#tp" x="1318" y="865"/><use href="#tl" x="1085" y="1060"/><use href="#tl" x="1268" y="1130"/><use href="#leaf" x="1478" y="1015"/><use href="#leaf" x="540" y="1105"/><use href="#tp" x="1177" y="1320"/><use href="#tp" x="1397" y="1307"/><use href="#tp" x="945" y="1415"/><use href="#tp" x="540" y="1430"/><use href="#tp" x="735" y="1275"/><use href="#tl" x="895" y="1215"/><use href="#tp" x="1325" y="1523"/><use href="#tp" x="703" y="1530"/></g>
    </g>

    <!-- river -->
    <g class="river">
      <g transform="translate(2100 1030) scale(.44643 .3648)"><path d="M1568,490Q1540,550 1490,550Q1400,520 1290,540Q1265,600 1290,680Q1330,850 1300,950L1240,1070"/><path class="wide" d="M1087,1290L1075,1400L1060,1500Q1080,1600 1150,1540Q1240,1410 1330,1440Q1380,1480 1390,1590"/></g>
      <g transform="translate(2760 1030) scale(.45918 .3648)"><path d="M50,19L75,190L112,300L95,430L65,530L0,560"/></g>
    </g>
    <g class="boundary">
      <g transform="translate(2100 1030) scale(.44643 .3648)"><path d="M1568,490Q1540,550 1490,550Q1400,520 1290,540Q1265,600 1290,680Q1330,850 1300,950L1240,1070 M1087,1290L1075,1400L1060,1500Q1080,1600 1150,1540Q1240,1410 1330,1440Q1380,1480 1390,1590 M1175,60L1130,230L1190,265L1195,320H940L905,400L865,530L780,480H730L700,360H630V300L680,260L650,170 M1270,50L1300,80"/></g>
      <g transform="translate(2760 1030) scale(.45918 .3648)"><path d="M65,160L112,300L95,430L65,530L0,560"/></g>
    </g>

    <!-- streets -->
    <use class="minor-case" href="#minor"/><use class="minor-fill" href="#minor"/>
    <use class="tertiary-case" href="#tertiary"/><use class="tertiary-fill" href="#tertiary"/>
    <use class="secondary-case" href="#secondary"/><use class="secondary-fill" href="#secondary"/>
    <use class="primary-case" href="#primary"/><use class="primary-fill" href="#primary"/>
    <use class="trunk-case" href="#trunk"/><use class="trunk-fill" href="#trunk"/>
    <use class="motorway-case" href="#motorway"/><use class="motorway-fill" href="#motorway"/>
    <use class="rail-base" href="#rail"/><use class="rail-dash" href="#rail"/>

    <g class="boundary">
      <g transform="translate(1600 1030) scale(.38265 .3648)"><path d="M500,19L430,220L540,330 M640,480L600,570L430,630 M260,610L180,660L130,800L165,840L160,940 M220,1030Q300,1000 400,1060L520,1090L585,870 M730,1040L820,830L740,720L670,680 M80,1440V1500L250,1505L350,1430L480,1300L530,1315H760L880,1275L960,1240"/></g>
    </g>
    <g class="paths">
      <g transform="translate(330 1030) scale(.5102 .3648)"><path d="M812,720L868,760L850,850L800,960L775,1050L775,1150L752,1220L765,1290L755,1320 M680,1085L730,1055L775,1055 M1437,400L1500,415L1530,370L1568,335"/></g>
      <g transform="translate(2100 1030) scale(.44643 .3648)"><path d="M580,290L520,420 M590,300L560,440V520 M455,545L555,560L530,640"/></g>
      <g transform="translate(2760 1030) scale(.45918 .3648)"><path d="M898,38L935,42L975,70L1030,62L1125,19 M480,1220L455,1240V1270L515,1345"/></g>
    </g>
    <g transform="translate(2100 1030) scale(.44643 .3648)"><path class="cycle" d="M783,25L765,110L755,200L700,310 M658,460L620,630L580,680"/></g>
    <g transform="translate(1600 1030) scale(.38265 .3648)"><rect x="1197" y="1322" width="42" height="45" fill="#7981b0"/></g>
    <g fill="#d08f55">
      <path d="M1031,1535L1042,1554H1020Z M1585,1310L1596,1329H1574Z M1565,1488L1576,1507H1554Z M3392,1291L3403,1310H3381Z M2853,1540L2863,1558H2842Z"/>
    </g>

    <!-- route shields -->
    <g class="shield">
      <g fill="#f5e3cf" stroke="#d9b48a" color="#5c4416"><rect x="725" y="1005" width="131" height="48" rx="4"/><text x="748" y="1040" textLength="88">US 250</text><rect x="2547" y="1420" width="130" height="83" rx="4"/><text x="2568" y="1456" textLength="90">US 250</text><text x="2576" y="1489" textLength="73">VA 20</text></g>
      <g fill="#f0f0f0" stroke="#c2c2c2" color="#666"><rect x="1469" y="1056" width="129" height="47" rx="4"/><text x="1489" y="1090" textLength="88">SR 855</text><rect x="1331" y="1272" width="129" height="48" rx="4"/><text x="1353" y="1305" textLength="89">CR 809</text><rect x="1724" y="1156" width="129" height="47" rx="4"/><text x="1746" y="1191" textLength="87">SR 302</text><rect x="2612" y="1010" width="75" height="36" rx="4"/></g>
      <g fill="#ecedd7" stroke="#c5ca9c" color="#5d612c"><rect x="1966" y="1134" width="76" height="47" rx="4"/><text x="1981" y="1168" textLength="48">654</text><rect x="1722" y="1450" width="129" height="47" rx="4"/><text x="1743" y="1484" textLength="87">VA 302</text></g>
      <g fill="#ebccd2" stroke="#d293a2" color="#80294c"><rect x="2202" y="1162" width="130" height="48" rx="4"/><text x="2223" y="1197" textLength="90">US 250</text></g>
    </g>

    <!-- place names -->
    <g class="names">
      <g fill="#85583a"><text x="1484" y="1356" textLength="205">Lewis Mountain</text><text x="1546" y="1390" textLength="80">269 m</text><text x="1523" y="1534" textLength="85">Mount</text><text x="1507" y="1568" textLength="115">Jefferson</text><text x="1526" y="1602" textLength="79">258 m</text><text x="989" y="1583" textLength="83">Round</text><text x="1007" y="1617" textLength="45">Top</text><text x="3333" y="1339" textLength="116">Trevillian</text><text x="3329" y="1373" textLength="126">Mountain</text><text x="3351" y="1406" textLength="80">411 m</text></g>
      <text class="road" x="934" y="1116" textLength="88" transform="rotate(3 934 1116)">Ivy Road</text>
      <text class="road" x="1600" y="1226" textLength="90" transform="rotate(20 1600 1226)">Ivy Road</text>
      <text class="road" x="2898" y="1592" transform="rotate(55 2898 1592)">Richmond</text>
      <text x="333" y="1527" fill="#a0283f" font-size="25" textLength="45" transform="rotate(4 333 1527)">114</text>
      <text x="2200" y="1354" fill="#a886ae" font-style="italic" textLength="193">Charlottesville</text>
      <text x="2193" y="1579" fill="#3a3a3a" font-size="35" textLength="242">Charlottesville</text>
      <text x="2780" y="1038" fill="#4a7fb9" font-size="24" textLength="56" transform="rotate(84 2780 1038)">River</text>
    </g>

    <!-- incident markers -->
    <g class="incidents">
      <g transform="translate(1600 1030) scale(.38265 .3648)"><path d="M472,170h0M468,263h0M687,217h0M10,432h0M522,760h0M498,806h0M262,854h0M371,950h0M236,1040h0M717,871h0M768,892h0M742,915h0M807,952h0M953,885h0M991,885h0M748,1030h0M747,1063h0M794,1086h0M848,1076h0M876,1083h0M835,1121h0M843,1147h0M875,1194h0M232,1288h0M281,1297h0M906,1290h0M901,1315h0M921,1325h0M976,1278h0M1029,1281h0M995,1362h0M721,1341h0M733,1392h0M880,1432h0M325,1437h0M115,1489h0M228,1505h0M263,1573h0M1479,1402h0"/></g>
      <g transform="translate(2100 1030) scale(.44643 .3648)"><path d="M417,1278h0"/></g>
    </g>
  </svg>
</div>
</body>
</html>
```
FILE: styles.css
```css
* { box-sizing: border-box; }
body {
  margin: 0;
  background: #fff;
  color: #212529;
  font-family: "Open Sans", "Noto Sans", sans-serif;
  font-size: 45px;
  line-height: 68px;
  letter-spacing: -1.350px;
  overflow: hidden;
}
.container { width: 3120px; margin-left: 334px; }
.header {
  display: flex;
  justify-content: space-between;
  align-items: flex-start;
  height: 225px;
  padding-top: 35px;
}
h1, h2, h3, p { margin: 0; }
.title { margin-top: 7px; font-size: 90px; line-height: 108px; font-weight: 600; letter-spacing: -2.300px; }
.logo { width: 521px; height: 150px; letter-spacing: 0; }
.wordmark { font-family: "Liberation Serif", serif; fill: #00599c; stroke: #00599c; stroke-width: 1.4px; }
.of { font-style: italic; stroke-width: .6px; }
.stars { fill: #fff; font: 10px "DejaVu Sans", sans-serif; }
.rule { margin: 0; border: 0; background: #e5e5e5; }
.rule-top { height: 3px; }
.rule-sub { height: 2px; margin-top: 42px; }
.subtitle { margin-top: 114px; font-size: 68px; line-height: 82px; font-weight: 600; letter-spacing: -2.550px; }
.card {
  height: 362px;
  margin-top: 45px;
  padding: 62px 58px 0;
  border: 2px solid #2f353a;
  border-radius: 10px;
  background: #343a40;
  color: #fff;
}
.count { font-size: 90px; line-height: 108px; font-weight: 600; letter-spacing: -7px; margin: -1px 0 0 -3px; }
.caption { margin-top: 21px; }
.options {
  display: flex;
  height: 95px;
  margin-top: 67px;
  padding-top: 2px;
  border: 3px solid #dfdfdf;
  border-radius: 10px;
}
.option { display: flex; height: 68px; }
.radio {
  appearance: none;
  width: 36px;
  height: 36px;
  margin: 14px 0 0;
  border: 1.500px solid #767676;
  border-radius: 50%;
  flex: none;
}
.radio:checked { border-color: #0075ff; background: radial-gradient(circle, #0075ff 10.500px, #fff 11.500px); }
.map { display: block; width: 3120px; height: 565px; font-family: "Noto Sans", "Open Sans", sans-serif; letter-spacing: 0; }
.map path { vector-effect: non-scaling-stroke; }

.park { fill: #c8facc; }
.park-light { fill: #dffce2; }
.golf { fill: #b5e3b5; }
.wood { fill: #add19e; }
.water { fill: #aad3df; }
.school { fill: #ffffe5; }
.school-line { fill: none; stroke: #f8f39a; stroke-width: 2px; }
.residential { fill: #e0dfdf; }
.retail { fill: #fbd6d1; }
.pitch { fill: #aae0cb; }
.track { fill: #dcf8e4; stroke: #8df5a2; stroke-width: 3px; }
.fairway { fill: none; stroke: #cdebb0; stroke-width: 6px; stroke-linecap: round; }
.trees { fill: none; stroke: #7fae7c; stroke-width: 2px; opacity: .7; }

.river { fill: none; stroke: #aad3df; stroke-width: 10px; }
.wide { stroke-width: 13px; }
.boundary { fill: none; stroke: #b096b5; stroke-width: 4px; stroke-dasharray: 18 4 4 4; opacity: .8; }
.paths { fill: none; stroke: #cda96b; stroke-width: 2px; stroke-dasharray: 9 9; }
.cycle { fill: none; stroke: #4848ff; stroke-width: 2.500px; stroke-dasharray: 3 6; }

.minor-case, .minor-fill, .tertiary-case, .tertiary-fill, .secondary-case, .secondary-fill,
.primary-case, .primary-fill, .trunk-case, .trunk-fill, .motorway-case, .motorway-fill {
  fill: none;
  stroke-linejoin: round;
  stroke-linecap: round;
}
.minor-case { stroke: #d2d1d0; stroke-width: 8px; }
.minor-fill { stroke: #fff; stroke-width: 5px; }
.tertiary-case { stroke: #c4c3c1; stroke-width: 12px; }
.tertiary-fill { stroke: #fff; stroke-width: 9px; }
.secondary-case { stroke: #bfc579; stroke-width: 14px; }
.secondary-fill { stroke: #f7fabf; stroke-width: 11px; }
.primary-case { stroke: #cf9f58; stroke-width: 17px; }
.primary-fill { stroke: #fcd6a4; stroke-width: 13.500px; }
.trunk-case { stroke: #d1755c; stroke-width: 18px; }
.trunk-fill { stroke: #f9b29c; stroke-width: 15px; }
.motorway-case { stroke: #e0648a; stroke-width: 20px; }
.motorway-fill { stroke: #e892a2; stroke-width: 17px; }
.rail-base { fill: none; stroke: #707070; stroke-width: 7.500px; }
.rail-dash { fill: none; stroke: #eee; stroke-width: 2px; stroke-dasharray: 18 18; }

.shield rect { stroke-width: 2px; }
.shield text { fill: currentColor; stroke: none; font-size: 27px; font-weight: 500; }
.names { font-size: 27px; font-weight: 500; stroke: rgba(255, 255, 255, .6); stroke-width: 4px; paint-order: stroke; stroke-linejoin: round; }
.road { fill: #42301c; font-size: 23px; stroke: #fcd6a4; }
.incidents { fill: none; stroke: #f00; stroke-width: 15.700px; stroke-linecap: round; }
```
